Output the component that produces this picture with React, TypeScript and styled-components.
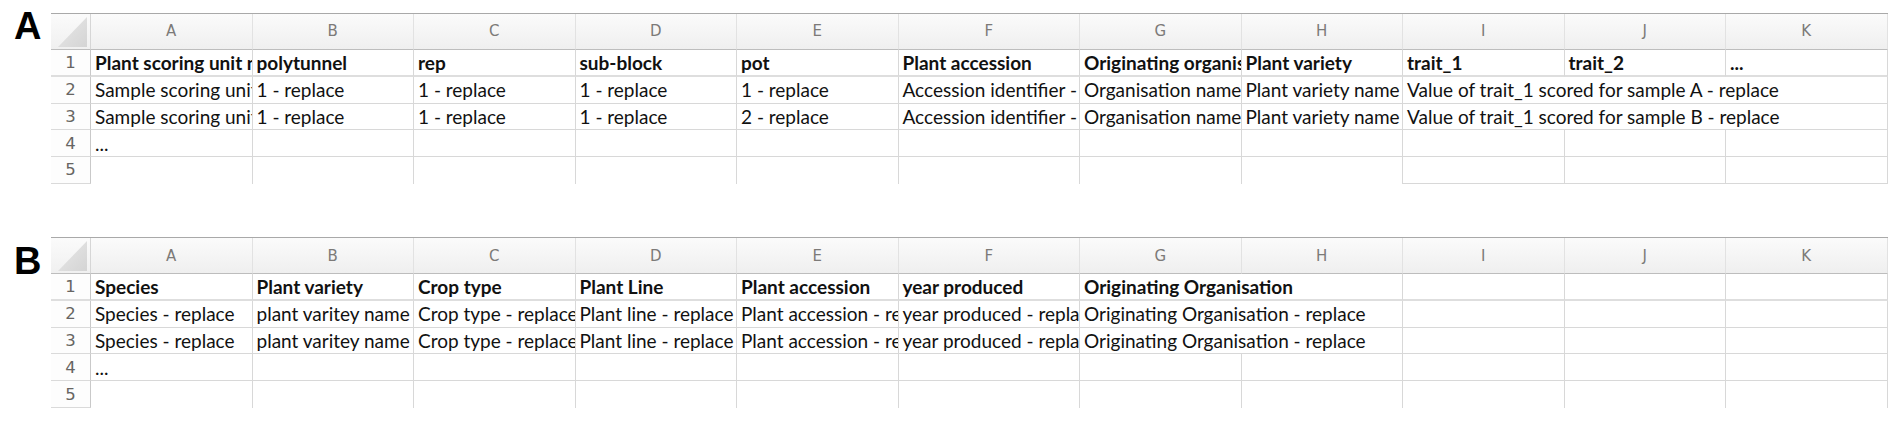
import React from "react";
import styled, { createGlobalStyle } from "styled-components";

const GlobalStyle = createGlobalStyle`
  html, body { margin: 0; padding: 0; background: #ffffff; }
  body { width: 1898px; height: 439px; overflow: hidden; }
`;

type CellData = { text?: string; bold?: boolean; span?: number; bottom?: boolean };
type SheetData = { label: string; labelShift: number; rows: CellData[][] };

const LETTERS = ["A", "B", "C", "D", "E", "F", "G", "H", "I", "J", "K"];
const COLS = "40px repeat(5, 161.5px) 181.5px repeat(5, 161.5px)";

const Figure = styled.div`
  display: flex;
  flex-direction: column;
  gap: 53.3px;
  padding-top: 12.7px;
`;

const Panel = styled.section`
  display: flex;
  align-items: flex-start;
`;

const PanelLabel = styled.div<{ $shift: number }>`
  width: 51px;
  box-sizing: border-box;
  padding-left: 14px;
  margin-top: ${(p) => p.$shift}px;
  font-family: "Liberation Sans", Arial, sans-serif;
  font-weight: 700;
  font-size: 38px;
  line-height: 1;
  color: #000;
`;

const Sheet = styled.div`
  display: grid;
  grid-template-columns: ${COLS};
  grid-template-rows: 36.5px repeat(5, 26.7px);
  border-top: 1px solid #a9a9a9;
`;

const Corner = styled.div`
  display: flex;
  justify-content: flex-end;
  align-items: flex-end;
  padding: 0 3px 2px 0;
  background: linear-gradient(#fbfbfb, #f0f0f0);
  border-bottom: 1px solid #bdbdbd;
  border-right: 1px solid #d6d6d6;
  box-sizing: border-box;
`;

const ColHead = styled.div`
  display: flex;
  align-items: center;
  justify-content: center;
  background: linear-gradient(#fbfbfb, #efefef);
  border-bottom: 1px solid #bdbdbd;
  border-right: 1px solid #e2e2e2;
  box-sizing: border-box;
  font-family: "DejaVu Sans", "Liberation Sans", sans-serif;
  font-size: 15px;
  color: #7c7a78;
`;

const RowHead = styled.div<{ $thick?: boolean }>`
  display: flex;
  align-items: center;
  justify-content: center;
  background: #fdfdfd;
  border-right: 1px solid #c9c9c9;
  border-bottom: ${(p) => (p.$thick ? "2px solid #dedede" : "1px solid #dadada")};
  box-sizing: border-box;
  font-family: "DejaVu Sans", "Liberation Sans", sans-serif;
  font-size: 16.5px;
  color: #676563;
`;

const DataCell = styled.div<{ $span: number; $bold?: boolean; $line: string }>`
  grid-column: span ${(p) => p.$span};
  display: flex;
  align-items: center;
  padding-left: 4px;
  overflow: hidden;
  white-space: nowrap;
  border-right: 1px solid #d8d8d8;
  border-bottom: ${(p) => p.$line};
  box-sizing: border-box;
  font-family: Lato, "Liberation Sans", sans-serif;
  font-size: 19px;
  font-weight: ${(p) => (p.$bold ? 700 : 400)};
  color: #111;
`;

const CornerMark = () => (
  <svg width="29" height="30" viewBox="0 0 29 30">
    <defs>
      <linearGradient id="cm" x1="0" y1="0" x2="1" y2="1">
        <stop offset="0" stopColor="#e9e9e9" />
        <stop offset="1" stopColor="#d4d4d4" />
      </linearGradient>
    </defs>
    <polygon points="0,30 29,30 29,0" fill="url(#cm)" />
  </svg>
);

const rowLine = (r: number, c: CellData) => {
  if (r === 0) return "2px solid #dedede";
  if (r === 4) return c.bottom ? "1px solid #d8d8d8" : "none";
  return "1px solid #d8d8d8";
};

const SheetView = ({ data }: { data: SheetData }) => (
  <Panel>
    <PanelLabel $shift={data.labelShift}>{data.label}</PanelLabel>
    <Sheet>
      <Corner>
        <CornerMark />
      </Corner>
      {LETTERS.map((l) => (
        <ColHead key={l}>{l}</ColHead>
      ))}
      {data.rows.map((row, r) => (
        <React.Fragment key={r}>
          <RowHead $thick={r === 0}>{r + 1}</RowHead>
          {row.map((c, i) => (
            <DataCell key={i} $span={c.span ?? 1} $bold={c.bold} $line={rowLine(r, c)}>
              {c.text}
            </DataCell>
          ))}
        </React.Fragment>
      ))}
    </Sheet>
  </Panel>
);

const empty = (n: number, extra: Partial<CellData> = {}): CellData[] =>
  Array.from({ length: n }, () => ({ ...extra }));

const sheetA: SheetData = {
  label: "A",
  labelShift: -6,
  rows: [
    [
      "Plant scoring unit name",
      "polytunnel",
      "rep",
      "sub-block",
      "pot",
      "Plant accession",
      "Originating organisation",
      "Plant variety",
      "trait_1",
      "trait_2",
      "...",
    ].map((t) => ({ text: t, bold: true })),
    [
      { text: "Sample scoring unit A - replace" },
      { text: "1 - replace" },
      { text: "1 - replace" },
      { text: "1 - replace" },
      { text: "1 - replace" },
      { text: "Accession identifier - replace" },
      { text: "Organisation name - replace" },
      { text: "Plant variety name - replace" },
      { text: "Value of trait_1 scored for sample A - replace", span: 3 },
    ],
    [
      { text: "Sample scoring unit B - replace" },
      { text: "1 - replace" },
      { text: "1 - replace" },
      { text: "1 - replace" },
      { text: "2 - replace" },
      { text: "Accession identifier - replace" },
      { text: "Organisation name - replace" },
      { text: "Plant variety name - replace" },
      { text: "Value of trait_1 scored for sample B - replace", span: 3 },
    ],
    [{ text: "..." }, ...empty(10)],
    [...empty(8), ...empty(3, { bottom: true })],
  ],
};

const sheetB: SheetData = {
  label: "B",
  labelShift: 5,
  rows: [
    [
      { text: "Species", bold: true },
      { text: "Plant variety", bold: true },
      { text: "Crop type", bold: true },
      { text: "Plant Line", bold: true },
      { text: "Plant accession", bold: true },
      { text: "year produced", bold: true },
      { text: "Originating Organisation", bold: true, span: 2 },
      ...empty(3),
    ],
    [
      { text: "Species - replace" },
      { text: "plant varitey name - replace" },
      { text: "Crop type - replace" },
      { text: "Plant line - replace" },
      { text: "Plant accession - replace" },
      { text: "year produced - replace" },
      { text: "Originating Organisation - replace", span: 2 },
      ...empty(3),
    ],
    [
      { text: "Species - replace" },
      { text: "plant varitey name - replace" },
      { text: "Crop type - replace" },
      { text: "Plant line - replace" },
      { text: "Plant accession - replace" },
      { text: "year produced - replace" },
      { text: "Originating Organisation - replace", span: 2 },
      ...empty(3),
    ],
    [{ text: "..." }, ...empty(10)],
    empty(11),
  ],
};

export default function App() {
  return (
    <>
      <GlobalStyle />
      <Figure>
        <SheetView data={sheetA} />
        <SheetView data={sheetB} />
      </Figure>
    </>
  );
}
